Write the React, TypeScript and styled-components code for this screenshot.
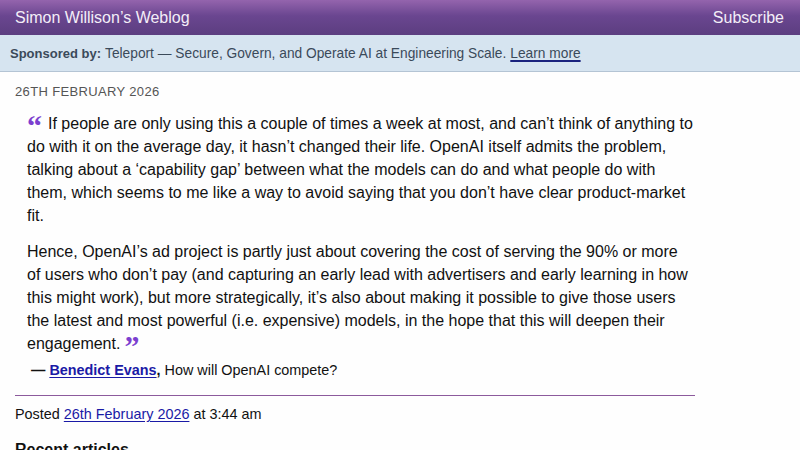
import React from "react";
import styled, { createGlobalStyle } from "styled-components";

const GlobalStyle = createGlobalStyle`
    body {
        margin: 0;
        background: #fefefe;
        font-family: "Liberation Sans", Arial, Helvetica, sans-serif;
        color: #111;
    }
`;

const Header = styled.header`
    height: 35px;
    display: flex;
    align-items: center;
    justify-content: space-between;
    padding: 0 16px 0 15px;
    background: linear-gradient(to bottom, #9464ad 0%, #6a4690 45%, #5c3e80 100%);
    color: #f4eef8;
    font-size: 16px;
`;

const HeaderLink = styled.a`
    color: inherit;
    text-decoration: none;
`;

const SponsorBar = styled.div`
    height: 35px;
    display: flex;
    align-items: center;
    padding: 1px 10px 0 10px;
    background: #d6e4f0;
    border-bottom: 1px solid #b4c4d4;
    color: #3b4a5a;
    font-size: 13.75px;
    white-space: pre;
`;

const SponsorLabel = styled.strong`
    font-size: 13px;
    margin-right: 4px;
`;

const SponsorLink = styled.a`
    color: #3b4a5a;
    margin-left: 4px;
    text-decoration: underline;
    text-decoration-color: #1a237e;
    text-decoration-thickness: 1.5px;
    text-underline-offset: 2px;
`;

const Main = styled.main`
    width: 680px;
    padding: 11px 0 0 15px;
`;

const DateLine = styled.div`
    font-size: 13px;
    line-height: 17px;
    letter-spacing: 0.35px;
    text-transform: uppercase;
    color: #555;
`;

const Quote = styled.blockquote`
    margin: 12px 0 0 12px;
    font-size: 16px;
    line-height: 23px;
    color: #111;
`;

const Para = styled.p`
    margin: 0 0 13px 0;
    &:last-child {
        margin-bottom: 0;
    }
`;

const QuoteMark = styled.span<{ $close?: boolean }>`
    font-family: "Liberation Serif", "DejaVu Serif", serif;
    font-weight: bold;
    font-size: 30px;
    line-height: 0;
    color: #7c3fcf;
    margin: ${(p) => (p.$close ? "0 0 0 4px" : "0 6px 0 0")};
    position: relative;
    top: 7px;
`;

const Cite = styled.p`
    margin: 5px 0 0 16px;
    font-size: 14.4px;
    line-height: 20px;
`;

const Dash = styled.strong`
    margin-right: 4px;
`;

const AuthorLink = styled.a`
    font-weight: bold;
    color: #1a1aa6;
    text-decoration: underline;
    text-underline-offset: 2px;
`;

const Rule = styled.hr`
    margin: 15px 0 0 0;
    border: none;
    border-top: 1px solid #8c5a9c;
`;

const Posted = styled.p`
    margin: 8px 0 0 0;
    font-size: 14.4px;
    line-height: 20px;
`;

const PostedLink = styled.a`
    color: #1a1aa6;
    text-decoration: underline;
    text-underline-offset: 2px;
`;

const SectionTitle = styled.h2`
    margin: 16px 0 0 0;
    font-size: 16px;
    line-height: 20px;
    font-weight: bold;
`;

export default function App() {
    return (
        <>
            <GlobalStyle />
            <Header>
                <HeaderLink href="#">Simon Willison’s Weblog</HeaderLink>
                <HeaderLink href="#">Subscribe</HeaderLink>
            </Header>
            <SponsorBar>
                <SponsorLabel>Sponsored by:</SponsorLabel>
                Teleport — Secure, Govern, and Operate AI at Engineering Scale.
                <SponsorLink href="#">Learn more</SponsorLink>
            </SponsorBar>
            <Main>
                <DateLine>26th February 2026</DateLine>
                <Quote>
                    <Para>
                        <QuoteMark>“</QuoteMark>If people are only using this a couple of times a week at
                        most, and can’t think of anything to do with it on the average day, it hasn’t
                        changed their life. OpenAI itself admits the problem, talking about a ‘capability
                        gap’ between what the models can do and what people do with them, which seems to
                        me like a way to avoid saying that you don’t have clear product-market fit.
                    </Para>
                    <Para>
                        Hence, OpenAI’s ad project is partly just about covering the cost of serving the
                        90% or more of users who don’t pay (and capturing an early lead with advertisers
                        and early learning in how this might work), but more strategically, it’s also
                        about making it possible to give those users the latest and most powerful (i.e.
                        expensive) models, in the hope that this will deepen their engagement.
                        <QuoteMark $close>”</QuoteMark>
                    </Para>
                </Quote>
                <Cite>
                    <Dash>—</Dash>
                    <AuthorLink href="#">Benedict Evans</AuthorLink>
                    <strong>,</strong> How will OpenAI compete?
                </Cite>
                <Rule />
                <Posted>
                    Posted <PostedLink href="#">26th February 2026</PostedLink> at 3:44 am
                </Posted>
                <SectionTitle>Recent articles</SectionTitle>
            </Main>
        </>
    );
}
